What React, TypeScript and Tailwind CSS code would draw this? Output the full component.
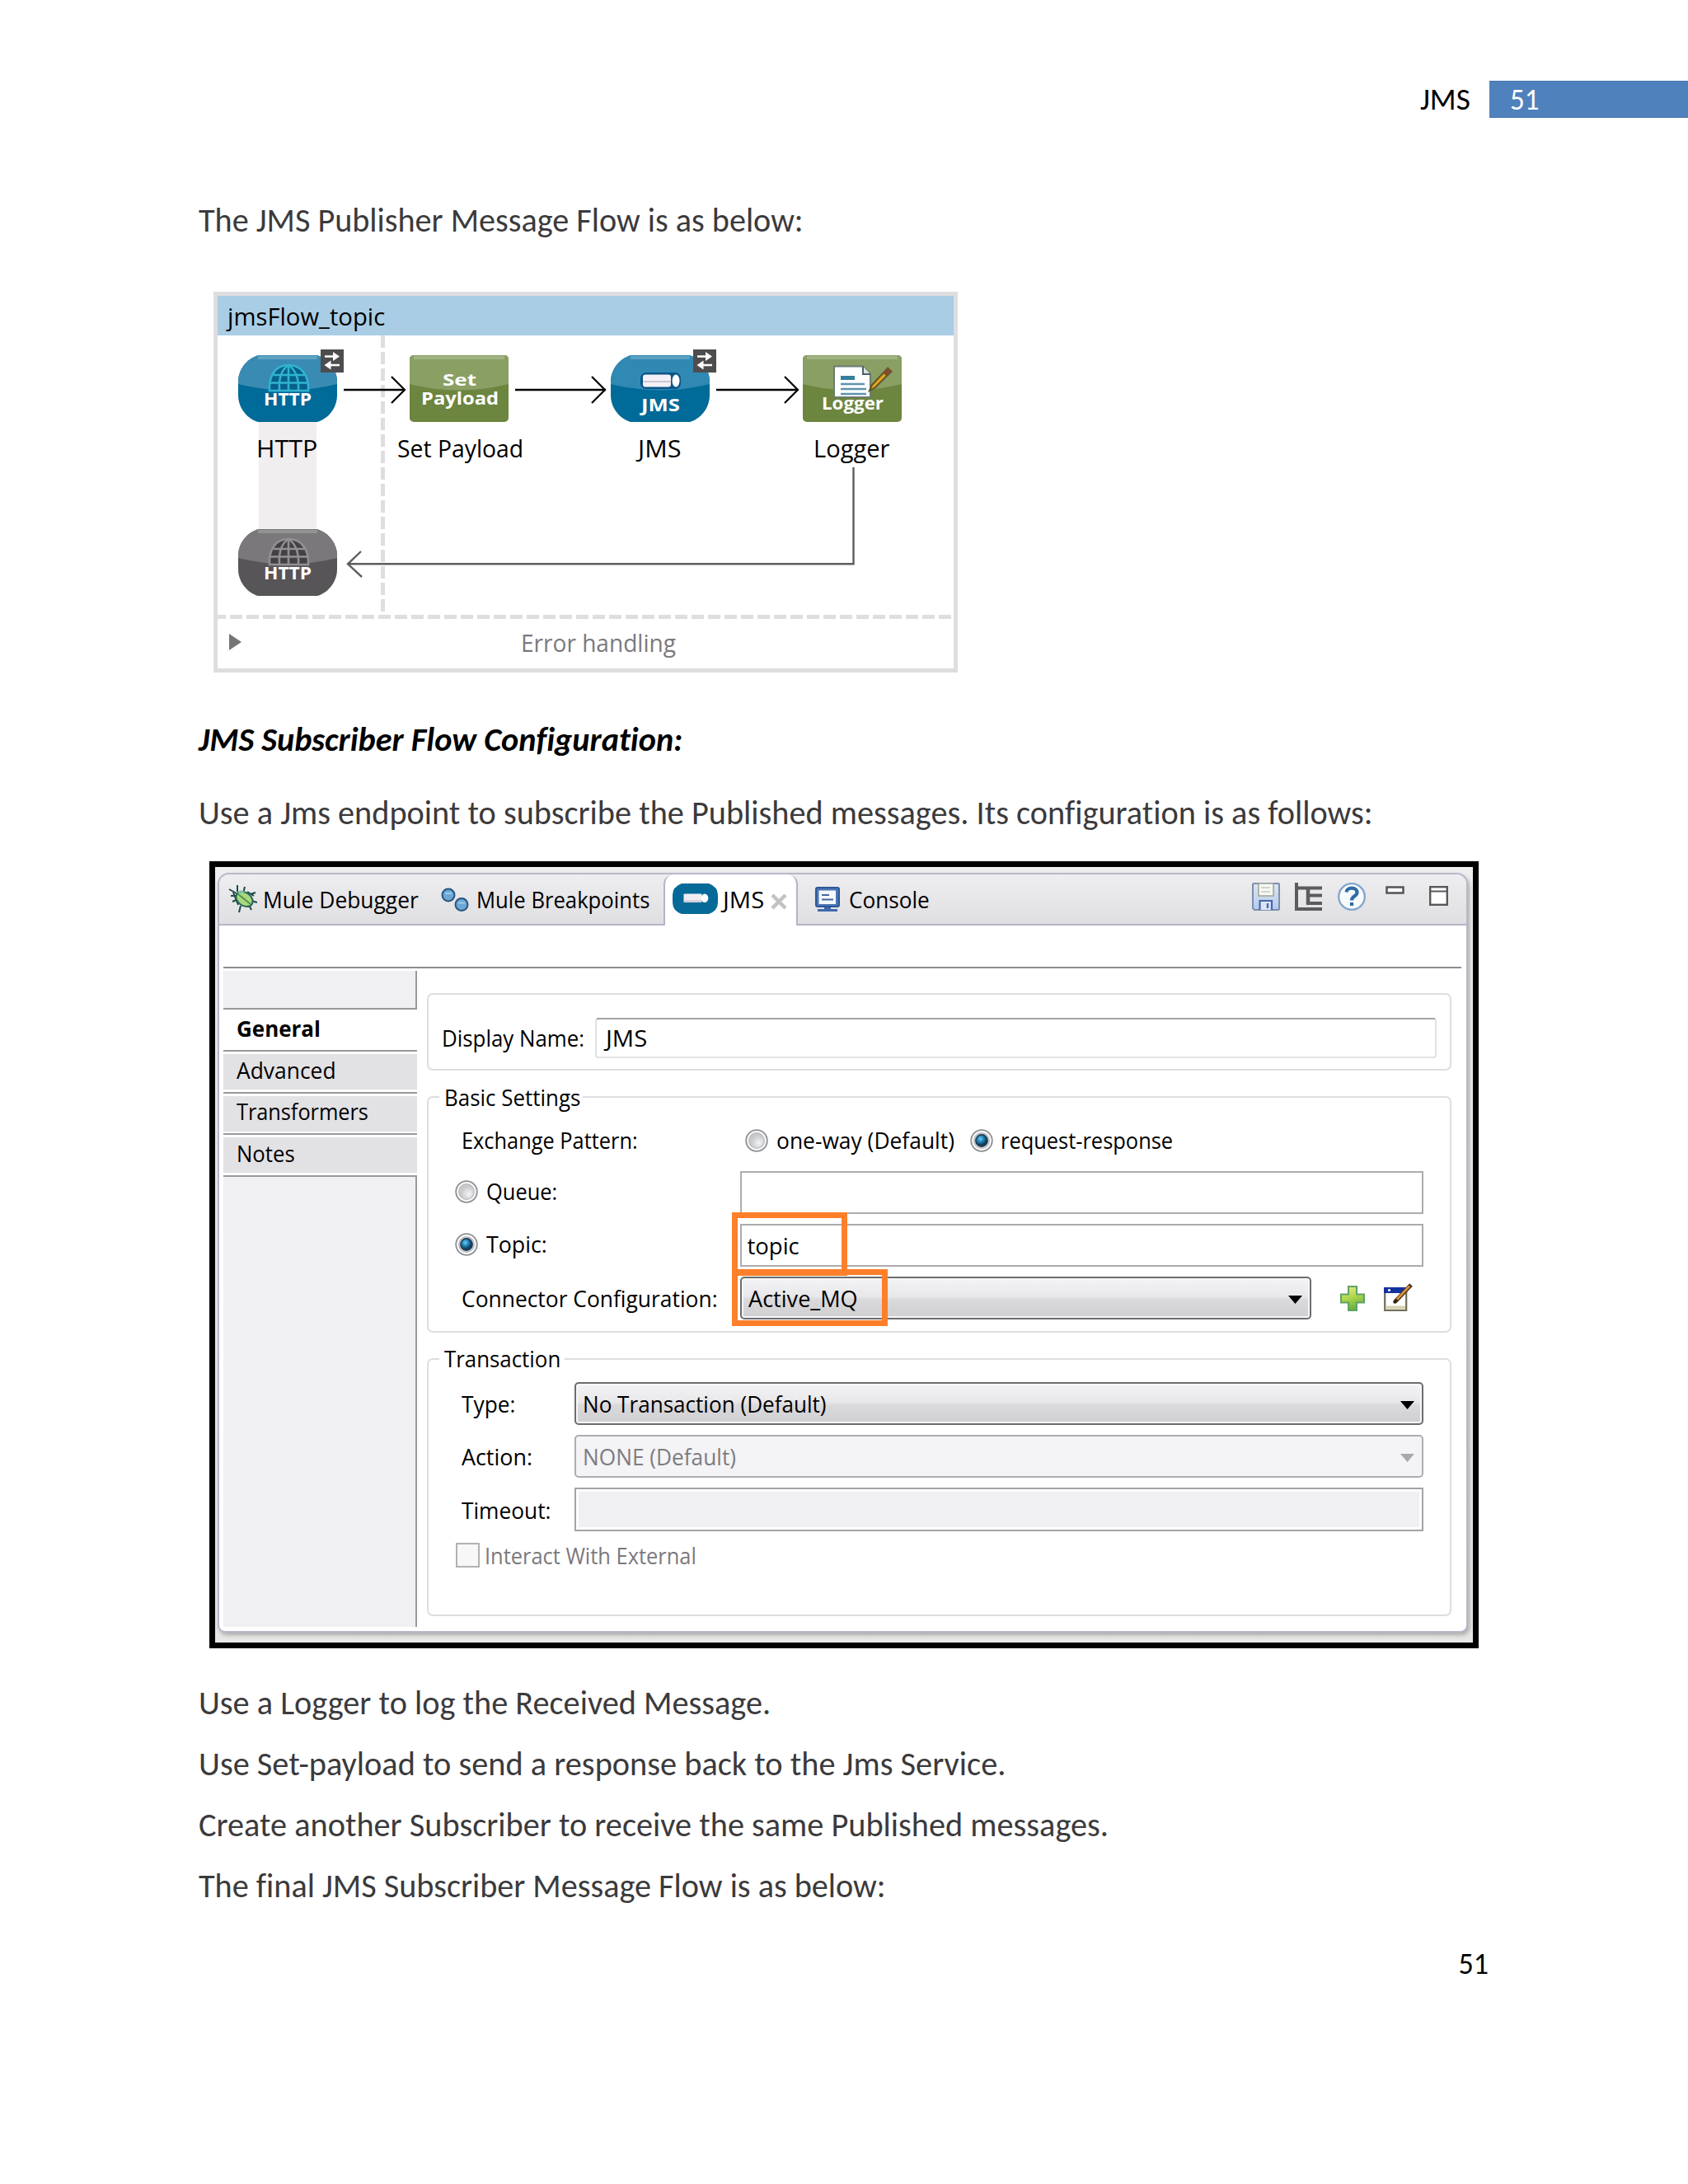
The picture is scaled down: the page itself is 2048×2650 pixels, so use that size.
import { useLayoutEffect, useRef, useState, type ReactNode } from 'react';
import clsx from 'clsx';

const DOC = "font-['Carlito','Lato',sans-serif]";
const UI = "font-['Segoe_UI','Open_Sans','Noto_Sans',sans-serif]";

// one line of text, squeezed to the width of its box
function Fit({ children, className }: { children: string; className: string }) {
    const box = useRef<HTMLSpanElement>(null);
    const text = useRef<HTMLSpanElement>(null);
    const [scale, setScale] = useState(1);

    useLayoutEffect(() => {
        if (box.current && text.current) {
            setScale((box.current.clientWidth - 3) / text.current.offsetWidth);
        }
    }, [children]);

    return (
        <span ref={box} className={clsx('block shrink-0 whitespace-nowrap px-[1.5px] pt-[2px]', className)}>
            <span ref={text} className="inline-block origin-left" style={{ transform: `scaleX(${scale})` }}>
                {children}
            </span>
        </span>
    );
}

function Swap({ className }: { className: string }) {
    return (
        <svg viewBox="0 0 28 28" className={clsx('absolute h-7 w-7', className)}>
            <rect width="28" height="28" fill="#4d4d4f" />
            <path d="M5 8.500H16M23 19H12" stroke="#fff" strokeWidth="2.4" />
            <path d="M15 3L23 8.500L15 14ZM12.500 13.500L4.500 19L12.500 24.500Z" fill="#fff" />
        </svg>
    );
}

function Capsule({ id, top, bottom, children }: { id: string; top: string; bottom: string; children: ReactNode }) {
    return (
        <svg viewBox="0 0 120 81" className="h-[81px] w-[120px]">
            <defs>
                <clipPath id={id}>
                    <path d="M25 0H95C110 4 120 18 120 32V49C120 63 110 77 96 81H24C10 77 0 63 0 49V32C0 18 10 4 25 0Z" />
                </clipPath>
            </defs>
            <g clipPath={`url(#${id})`}>
                <rect width="120" height="81" fill={bottom} />
                <path d="M0 0H120V35Q60 50 0 35Z" fill={top} />
                <rect x="24" y="1" width="72" height="4" fill="#fff" opacity="0.2" />
            </g>
            {children}
        </svg>
    );
}

function Plate({ children }: { children: ReactNode }) {
    return (
        <svg viewBox="0 0 120 81" className="h-[81px] w-[120px]">
            <rect width="120" height="81" rx="5" fill="#6c853f" />
            <path d="M5 0H115Q120 0 120 5V35Q60 50 0 35V5Q0 0 5 0Z" fill="#8a9f64" />
            <rect x="5" y="1" width="110" height="4" fill="#fff" opacity="0.2" />
            {children}
        </svg>
    );
}

function IconText({ x, y, w, size, children }: { x: number; y: number; w: number; size: number; children: string }) {
    return (
        <text x={x} y={y} textLength={w} lengthAdjust="spacingAndGlyphs" fontSize={size} fontWeight="700" fill="#fff" className={UI}>
            {children}
        </text>
    );
}

function Globe({ line, fill }: { line: string; fill: string }) {
    return (
        <g fill="none" stroke={line} strokeWidth="2.6">
            <path d="M38 43C37 24 46 12 61 12C76 12 86 24 85 43Z" fill={fill} />
            <path d="M61 12V43M50 43C49 28 53 17 61 12C69 17 74 28 73 43M43 24H80M38 33.500H85" />
        </g>
    );
}

function HttpIcon({ gray }: { gray?: boolean }) {
    return (
        <Capsule id={gray ? 'http-gray' : 'http-blue'} top={gray ? '#7a787a' : '#3a8bb4'} bottom={gray ? '#575557' : '#006a98'}>
            <Globe line={gray ? '#929092' : '#2fb4cf'} fill={gray ? '#434143' : '#08608c'} />
            <IconText x={31} y={61} w={58} size={21.5}>HTTP</IconText>
        </Capsule>
    );
}

function PublisherFlow() {
    return (
        <div className={clsx('ml-[259px] h-[462px] w-[903px] border-5 border-[#dfdde0] text-[30px] text-black', UI)}>
            <div className="flex h-12 items-center bg-[#a9cde4] pl-[10px]">
                <Fit className="w-[194px]">jmsFlow_topic</Fit>
            </div>
            <div className="relative h-[339px]">
                <div className="absolute left-[50px] top-[105px] h-[130px] w-[70px] bg-[#f0eeef]" />
                <div className="absolute left-[198px] top-0 h-[337px] w-[5px] bg-[repeating-linear-gradient(180deg,#dfdde0_0_15px,transparent_15px_20px)]" />
                <svg viewBox="0 0 893 339" className="absolute inset-0 h-[339px] w-[893px]" fill="none">
                    <g stroke="#000" strokeWidth="2.500">
                        <path d="M153 66H227M361 66H471M605 66H704" />
                        <path d="M211 50L227 66L211 82M454 50L470 66L454 82M688 50L704 66L688 82" strokeWidth="2.200" />
                    </g>
                    <path d="M771.500 160V277.300H158M174 262L158 277.300L175 293" stroke="#5f5d61" strokeWidth="2.400" />
                </svg>

                <div className="absolute left-[24.5px] top-6"><HttpIcon /></div>
                <Swap className="left-[125px] top-[17px]" />
                <Fit className="absolute left-[45px] top-[115px] w-[77px] leading-[40px]">HTTP</Fit>

                <div className="absolute left-[233px] top-6">
                    <Plate>
                        <IconText x={40} y={37} w={41} size={20}>Set</IconText>
                        <IconText x={14} y={60} w={94} size={22}>Payload</IconText>
                    </Plate>
                </div>
                <Fit className="absolute left-[216px] top-[115px] w-[156px] leading-[40px]">Set Payload</Fit>

                <div className="absolute left-[476.5px] top-6">
                    <Capsule id="jms-blue" top="#3089b3" bottom="#006a98">
                        <rect x="36" y="21" width="49" height="20" rx="7" fill="#0b5587" />
                        <rect x="39" y="23.500" width="34" height="15" rx="3" fill="#f4f1f6" />
                        <path d="M39 32H73" stroke="#cfc9d6" strokeWidth="2" />
                        <ellipse cx="79" cy="31" rx="4.500" ry="7.500" fill="#fff" />
                        <IconText x={37} y={67.5} w={47} size={22}>JMS</IconText>
                    </Capsule>
                </div>
                <Swap className="left-[577px] top-[17px]" />
                <Fit className="absolute left-[508px] top-[115px] w-[56px] leading-[40px]">JMS</Fit>

                <div className="absolute left-[710px] top-6">
                    <Plate>
                        <path d="M38 13.500H73L82 23V51H38Z" fill="#fff" stroke="#6d7a72" strokeWidth="2" />
                        <path d="M73 13.500V23H82" fill="#d9e4e2" stroke="#4c5f66" strokeWidth="2" />
                        <path d="M46 27.500H63" stroke="#357f9d" strokeWidth="5" />
                        <path d="M46 35H75M46 41H77M46 47H77" stroke="#5d93ae" strokeWidth="2.600" />
                        <path d="M81 43L84 36L101 18L105 22L88 39Z" fill="#e9a01f" stroke="#5c5726" strokeWidth="2" />
                        <path d="M98 21L103 15L108 20L102 25Z" fill="#8a4630" stroke="#6a5a2c" strokeWidth="1.500" />
                        <IconText x={23} y={66} w={75} size={21}>Logger</IconText>
                    </Plate>
                </div>
                <Fit className="absolute left-[721px] top-[115px] w-[95px] leading-[40px]">Logger</Fit>

                <div className="absolute left-[24.5px] top-[235px]"><HttpIcon gray /></div>
            </div>
            <div className="h-[5px] bg-[repeating-linear-gradient(90deg,#dfdde0_0_10px,transparent_10px_15px,#dfdde0_15px_20px)]" />
            <div className="flex h-[60px] items-center pb-[4px] text-[#7b797c]">
                <svg viewBox="0 0 15 20" className="ml-[14px] h-5 w-[15px]"><path d="M0 0L15 10L0 20Z" fill="#777578" /></svg>
                <Fit className="ml-[337px] w-[191px]">Error handling</Fit>
            </div>
        </div>
    );
}

function Radio({ checked, className }: { checked?: boolean; className?: string }) {
    return (
        <svg viewBox="0 0 28 28" className={clsx('h-7 w-7 shrink-0', className)}>
            <defs>
                <radialGradient id="radio-off" cx="0.65" cy="0.65">
                    <stop offset="0" stopColor="#f4f4f5" />
                    <stop offset="1" stopColor="#c9cacc" />
                </radialGradient>
                <radialGradient id="radio-on" cx="0.4" cy="0.35">
                    <stop offset="0" stopColor="#6fd0f4" />
                    <stop offset="0.500" stopColor="#2389bb" />
                    <stop offset="1" stopColor="#123e5e" />
                </radialGradient>
            </defs>
            <circle cx="14" cy="14" r="12.800" fill="#fafafa" stroke="#8d8f92" strokeWidth="1.800" />
            <circle cx="14" cy="14" r="9.300" fill="url(#radio-off)" stroke="#b7b8bb" strokeWidth="1.200" />
            {checked && <circle cx="14" cy="14" r="7.200" fill="url(#radio-on)" stroke="#1d3c55" strokeWidth="1.400" />}
        </svg>
    );
}

function Combo({ className, disabled, children }: { className: string; disabled?: boolean; children: ReactNode }) {
    return (
        <div
            className={clsx(
                'relative flex h-[52px] shrink-0 items-center rounded-[5px] border-2 pl-[6px] pr-[9px]',
                disabled
                    ? 'border-[#adacb0] bg-[#f4f3f6] text-[#7e7c80]'
                    : 'border-[#6d6c70] bg-[linear-gradient(180deg,#f3f2f4_0%,#e8e7e9_46%,#dad9db_54%,#cfced1_100%)] shadow-[inset_0_0_0_2px_#f6f6f7]',
                className,
            )}
        >
            {children}
            <svg viewBox="0 0 17 10" className="ml-auto mt-[3px] h-[10px] w-[17px]">
                <path d="M0 0H17L8.500 10Z" fill={disabled ? '#a9a8ab' : '#000'} />
            </svg>
        </div>
    );
}

function BugIcon() {
    return (
        <svg viewBox="0 0 35 35" className="h-[35px] w-[35px] shrink-0" fill="none">
            <path d="M11 1V9M20 3L18 11M1 6L10 11M3 14H11M5 21L12 18M27 12L33 10M28 20L35 22M25 25L28 31M15 26L13 34M23 9L31 14M6 10L12 25" stroke="#1d4a47" strokeWidth="2" />
            <ellipse cx="19.500" cy="18" rx="11" ry="8" transform="rotate(35 19.500 18)" fill="#a9d97c" stroke="#26625a" strokeWidth="2" />
            <path d="M12 12L27 24" stroke="#4d9150" strokeWidth="1.800" />
            <path d="M12 10Q16 8 19 10" stroke="#7fc1a5" strokeWidth="3" />
        </svg>
    );
}

function BreakpointsIcon() {
    return (
        <svg viewBox="0 0 34 30" className="h-[30px] w-[34px] shrink-0" fill="#6ba8d6" stroke="#27557f" strokeWidth="2">
            <circle cx="9" cy="9" r="7.500" />
            <circle cx="25" cy="20.500" r="7.500" />
            <path d="M5 7H13M21 18.500H29" stroke="#9bcbea" />
        </svg>
    );
}

function JmsTabIcon() {
    return (
        <svg viewBox="0 0 55 37" className="h-[37px] w-[55px] shrink-0">
            <path d="M11 0H44Q55 4 55 14V23Q55 33 44 37H11Q0 33 0 23V14Q0 4 11 0Z" fill="#066a99" />
            <rect x="13.500" y="12.500" width="22" height="10.500" rx="1" fill="#f1eef3" />
            <path d="M14 21.500H35" stroke="#c9c7cf" strokeWidth="2" />
            <ellipse cx="39" cy="17.800" rx="4.300" ry="5.300" fill="#fff" />
        </svg>
    );
}

function ConsoleIcon() {
    return (
        <svg viewBox="0 0 30 30" className="h-[30px] w-[30px] shrink-0">
            <rect x="1" y="1" width="28" height="23" rx="2" fill="#4a76b8" stroke="#2f5793" strokeWidth="2" />
            <rect x="4.500" y="4.500" width="20.500" height="16.500" fill="#f3f8fd" />
            <path d="M8 10H17M8 15.500H22" stroke="#47659c" strokeWidth="2" />
            <path d="M11 25H19V27H27V30H3V27H11Z" fill="#3f69a9" />
        </svg>
    );
}

function Tabs() {
    return (
        <div className="flex h-[62px] rounded-t-[12px] bg-linear-to-b from-[#eeedef] to-[#dfdee1] text-[27.5px]">
            <div className="flex w-[539px] items-center border-b-2 border-[#b5b4c8] pb-[1px] pl-[11px]">
                <BugIcon />
                <Fit className="ml-[5px] w-[192px]">Mule Debugger</Fit>
                <div className="ml-[26px] mt-[2px]"><BreakpointsIcon /></div>
                <Fit className="ml-[7px] w-[213px]">Mule Breakpoints</Fit>
            </div>
            <div className="flex w-[163px] items-center rounded-t-[12px] border-x-2 border-[#b5b4c8] bg-white pb-[3px] pl-[9px]">
                <JmsTabIcon />
                <Fit className="ml-[4px] w-[53px]">JMS</Fit>
                <svg viewBox="0 0 20 20" className="ml-[7px] mt-[7px] h-5 w-5"><path d="M2 2L18 18M18 2L2 18" stroke="#c2c1c3" strokeWidth="4.500" /></svg>
            </div>
            <div className="flex flex-1 items-center border-b-2 border-[#b5b4c8] pb-[1px] pl-[21px]">
                <ConsoleIcon />
                <Fit className="ml-[9px] w-[101px]">Console</Fit>
                <svg viewBox="0 0 34 34" className="ml-[390px] mb-[6px] h-[34px] w-[34px] shrink-0">
                    <defs>
                        <linearGradient id="disk" x1="0" y1="0" x2="0" y2="1">
                            <stop offset="0" stopColor="#dfe5ea" />
                            <stop offset="1" stopColor="#b4cbf0" />
                        </linearGradient>
                    </defs>
                    <path d="M2 1H32L33 2V32L32 33H3L1 31V2Z" fill="url(#disk)" stroke="#7c8fae" strokeWidth="2" />
                    <rect x="8" y="1" width="18" height="15" fill="#f8f8f3" stroke="#a2a89f" strokeWidth="1.600" />
                    <path d="M11 6H22M11 11H22" stroke="#c5c8c3" strokeWidth="1.600" />
                    <path d="M9.500 33V22H24V33" fill="#dae5f6" stroke="#4a66b0" strokeWidth="2.200" />
                    <path d="M19 25V31" stroke="#4a66b0" strokeWidth="2.400" />
                </svg>
                <svg viewBox="0 0 34 34" className="ml-[18px] mb-[6px] h-[34px] w-[34px] shrink-0" fill="none" stroke="#5d5b5e">
                    <path d="M2 0V34M2 6.500H33M0 32H33M14 15.500H33M14 25H33" strokeWidth="4" />
                    <path d="M16 6V26" strokeWidth="4.500" />
                </svg>
                <svg viewBox="0 0 34 34" className="ml-[18px] mb-[6px] h-[34px] w-[34px] shrink-0" fill="none">
                    <circle cx="17" cy="17" r="15.800" fill="#f7fbfe" stroke="#83a5cc" strokeWidth="2.300" />
                    <path d="M10.500 11.500C11 5 23.500 5 23.500 12C23.500 16.500 17 16 17 21.500M17 24V28" stroke="#2f6ba5" strokeWidth="4.200" />
                </svg>
                <svg viewBox="0 0 23 10" className="ml-[24px] mb-[22px] h-[10px] w-[23px] shrink-0">
                    <rect x="1.500" y="1.500" width="20" height="7" fill="#fff" stroke="#59575a" strokeWidth="2.600" />
                </svg>
                <svg viewBox="0 0 23 24" className="ml-[30px] mb-[8px] h-6 w-[23px] shrink-0">
                    <rect x="1.200" y="1.200" width="20.600" height="21.600" fill="#fff" stroke="#59575a" strokeWidth="2.400" />
                    <path d="M1 6.500H22" stroke="#59575a" strokeWidth="2" />
                </svg>
            </div>
        </div>
    );
}

function Sidebar() {
    return (
        <div className="ml-[5px] flex h-[799px] w-[235px] shrink-0 flex-col pt-[3px] text-[27.5px]">
            <div className="h-[47px] border-b-2 border-r-2 border-[#99989b] bg-[#f0eff1]" />
            <div className="flex h-[51px] items-center border-b-2 border-[#99989b] pb-[5px] pl-[14px]">
                <Fit className="w-[105px] font-bold">General</Fit>
            </div>
            <div className="h-[50.5px] border-b-2 border-[#99989b] pt-[3px]">
                <div className="flex h-[43px] items-center bg-[#e2e1e3] pb-[6px] pl-[14px]"><Fit className="w-[124px]">Advanced</Fit></div>
            </div>
            <div className="h-[50.5px] border-b-2 border-[#99989b] pt-[3px]">
                <div className="flex h-[43px] items-center bg-[#e2e1e3] pb-[6px] pl-[14px]"><Fit className="w-[163px]">Transformers</Fit></div>
            </div>
            <div className="h-[51px] border-b-2 border-[#99989b] pt-[3px]">
                <div className="flex h-[43px] items-center bg-[#e2e1e3] pb-[6px] pl-[14px]"><Fit className="w-[74px]">Notes</Fit></div>
            </div>
            <div className="flex-1 border-r-2 border-[#99989b] bg-[#f0eff1]" />
        </div>
    );
}

function BasicSettings() {
    return (
        <fieldset className="mt-3 h-[306px] rounded-[7px] border-2 border-[#dcdee2]">
            <legend className="ml-[13px] h-10 pl-1 pr-[2px] leading-[37px]"><Fit className="w-[168px]">Basic Settings</Fit></legend>
            <div className="flex flex-col gap-3 pt-[6px]">
                <div className="flex h-[52px] items-center">
                    <Fit className="ml-[38px] w-[217px]">Exchange Pattern:</Fit>
                    <Radio className="ml-[129px] mt-[2px]" />
                    <Fit className="ml-2 w-[219px]">one-way (Default)</Fit>
                    <Radio checked className="ml-[18px] mt-[2px]" />
                    <Fit className="ml-[7px] w-[212px]">request-response</Fit>
                </div>
                <div className="flex h-[52px] items-center">
                    <div className="flex w-[378px] items-center pb-[5px] pl-8">
                        <Radio className="mt-[2px]" />
                        <Fit className="ml-2 w-[89px]">Queue:</Fit>
                    </div>
                    <div className="h-[52px] w-[829px] border-2 border-[#acabaf]" />
                </div>
                <div className="flex h-[52px] items-center">
                    <div className="flex w-[378px] items-center pb-[5px] pl-8">
                        <Radio checked className="mt-[2px]" />
                        <Fit className="ml-2 w-[77px]">Topic:</Fit>
                    </div>
                    <div className="relative flex h-[52px] w-[829px] items-center border-2 border-[#acabaf] pl-[5px]">
                        <Fit className="w-[66px]">topic</Fit>
                        <div className="absolute -left-3 -top-4 h-[77px] w-[140px] border-7 border-[#fe7f2a]" />
                    </div>
                </div>
                <div className="flex h-[52px] items-center">
                    <div className="flex w-[378px] items-center pl-[38px]">
                        <Fit className="w-[314px]">Connector Configuration:</Fit>
                    </div>
                    <Combo className="w-[693px]">
                        <Fit className="w-[136px]">Active_MQ</Fit>
                        <div className="absolute -left-3 -top-[11px] h-[69px] w-[189px] border-7 border-[#fe7f2a]" />
                    </Combo>
                    <svg viewBox="0 0 30 31" className="ml-[35px] h-[31px] w-[30px]">
                        <defs>
                            <linearGradient id="plus" x1="0" y1="0" x2="0.300" y2="1">
                                <stop offset="0" stopColor="#e6f08a" />
                                <stop offset="0.500" stopColor="#b4d850" />
                                <stop offset="1" stopColor="#69b43c" />
                            </linearGradient>
                        </defs>
                        <path d="M10 1H20V10.500H29V20.500H20V30H10V20.500H1V10.500H10Z" fill="url(#plus)" stroke="#62a266" strokeWidth="2" />
                    </svg>
                    <svg viewBox="0 0 36 34" className="ml-[23px] mb-[3px] h-[34px] w-9">
                        <rect x="1.200" y="6" width="26" height="27" fill="#fff" stroke="#6f6d5c" strokeWidth="2.200" />
                        <path d="M2 29.500H26" stroke="#d6d2ae" strokeWidth="4" />
                        <rect x="0" y="5" width="27" height="7" fill="#1433a0" />
                        <path d="M5 8.500H8" stroke="#fff" strokeWidth="2.500" />
                        <path d="M14 22L33 2" stroke="#4a3318" strokeWidth="5" />
                        <path d="M16 19.500L31 3.500" stroke="#d58f35" strokeWidth="3" />
                        <circle cx="13.500" cy="22.500" r="2.200" fill="#2d2113" />
                    </svg>
                </div>
            </div>
        </fieldset>
    );
}

function Transaction() {
    return (
        <fieldset className="mt-3 h-[332px] rounded-[7px] border-2 border-[#dcdee2]">
            <legend className="ml-[13px] h-10 pl-1 pr-[4px] leading-[36px]"><Fit className="w-[144px]">Transaction</Fit></legend>
            <div className="flex flex-col gap-3 pt-[8px]">
                <div className="flex items-center">
                    <div className="w-[177px] pl-[38px]"><Fit className="w-[68px]">Type:</Fit></div>
                    <Combo className="w-[1030px]"><Fit className="w-[299px]">No Transaction (Default)</Fit></Combo>
                </div>
                <div className="flex items-center">
                    <div className="w-[177px] pl-[38px]"><Fit className="w-[89px]">Action:</Fit></div>
                    <Combo disabled className="w-[1030px]"><Fit className="w-[189px]">NONE (Default)</Fit></Combo>
                </div>
                <div className="flex items-center">
                    <div className="w-[177px] pl-[38px]"><Fit className="w-[111px]">Timeout:</Fit></div>
                    <div className="h-[53px] w-[1030px] border-2 border-[#a4a3a7] bg-[#f0eff2] shadow-[inset_0_0_0_3px_#fdfdfd]" />
                </div>
            </div>
            <div className="mt-[9px] flex h-10 items-center pl-[33px] text-[#7b797d]">
                <div className="h-[30px] w-[29px] border-2 border-[#b2b1b5] bg-[#f7f7f8]" />
                <Fit className="ml-[4px] w-[260px]">Interact With External</Fit>
            </div>
        </fieldset>
    );
}

function SubscriberPanel() {
    return (
        <div className={clsx('ml-[254px] mt-[34.5px] h-[955px] w-[1540px] border-7 border-black bg-linear-to-b from-[#efeff0] to-[#e7e7e5] pl-[3px] pt-[7px] text-black', UI)}>
            <div className="h-[922px] w-[1517px] rounded-b-[9px] rounded-t-[14px] border-2 border-[#b8b7cb] bg-white shadow-[2px_3px_5px_#aaaaa8]">
                <Tabs />
                <div className="ml-[5px] mt-[50px] h-[2px] w-[1502px] bg-[#8e8d91]" />
                <div className="flex text-[27.5px]">
                    <Sidebar />
                    <div className="ml-3 w-[1243px] pt-[30px]">
                        <div className="flex h-[94px] items-center rounded-[7px] border-2 border-[#dcdee2] pl-[14px] pt-[14px]">
                            <Fit className="w-[176px]">Display Name:</Fit>
                            <div className="ml-[12px] flex h-[49px] w-[1021px] items-center rounded-[4px] border-2 border-[#e1e2e6] border-t-[#a3a2a7] pl-[9px]">
                                <Fit className="w-[53px]">JMS</Fit>
                            </div>
                        </div>
                        <BasicSettings />
                        <Transaction />
                    </div>
                </div>
            </div>
        </div>
    );
}

export default function App() {
    return (
        <main className={clsx('flex h-[2650px] w-[2048px] flex-col overflow-hidden bg-white text-[40px] leading-[48px] text-[#3b3a3c] [font-variant-ligatures:none]', DOC)}>
            <header className="mt-[97.5px] flex h-[45px] shrink-0 items-center text-[36px]">
                <Fit className="ml-[1721px] w-[64px] text-black">JMS</Fit>
                <div className="ml-[22px] flex h-[45px] flex-1 items-center border-y border-[#4675ae] bg-[#4f81bd] pl-[23px] text-white">
                    <Fit className="w-[39px]">51</Fit>
                </div>
            </header>

            <Fit className="ml-[239.5px] mt-[99px] w-[737px]">The JMS Publisher Message Flow is as below:</Fit>
            <div className="mt-[62.5px]"><PublisherFlow /></div>

            <Fit className="ml-[239px] mt-[55.5px] w-[590px] font-bold italic text-black">JMS Subscriber Flow Configuration:</Fit>
            <Fit className="ml-[239px] mt-[39px] w-[1428px]">Use a Jms endpoint to subscribe the Published messages. Its configuration is as follows:</Fit>
            <SubscriberPanel />

            <div className="ml-[239px] mt-[29px] leading-[72px]">
                <Fit className="w-[697px]">Use a Logger to log the Received Message.</Fit>
                <Fit className="w-[982px]">Use Set-payload to send a response back to the Jms Service.</Fit>
                <Fit className="w-[1107px]">Create another Subscriber to receive the same Published messages.</Fit>
                <Fit className="w-[837px]">The final JMS Subscriber Message Flow is as below:</Fit>
            </div>
            <Fit className="ml-[1768px] mt-8 w-[40px] text-[36px] text-black">51</Fit>
        </main>
    );
}
